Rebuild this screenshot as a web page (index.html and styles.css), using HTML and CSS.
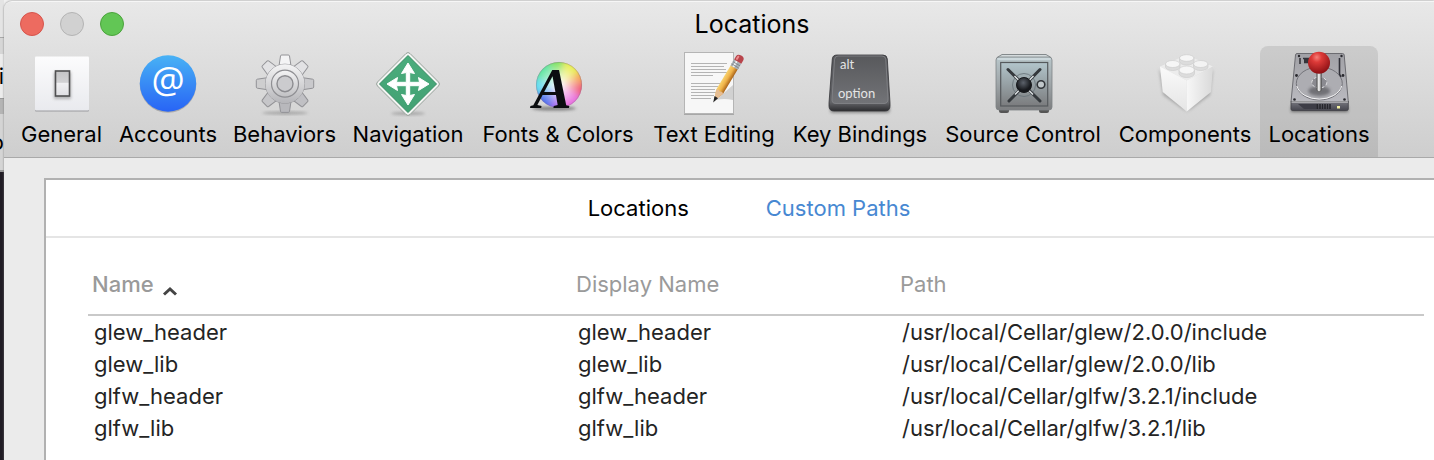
FILE: index.html
```html
<!DOCTYPE html>
<html lang="en">
<head>
<meta charset="utf-8">
<title>Locations</title>
<link rel="stylesheet" href="styles.css">
</head>
<body>
<div class="desktop">
  <div class="behind" aria-hidden="true">
    <div class="behind-title"></div>
    <div class="behind-bar">i</div>
    <div class="behind-tabs"></div>
    <div class="behind-path">o</div>
  </div>
  <main class="window">
    <header class="chrome">
      <div class="titlebar">
        <div class="lights">
          <button class="light close" aria-label="Close"></button>
          <button class="light minimize" aria-label="Minimize"></button>
          <button class="light zoom" aria-label="Zoom"></button>
        </div>
        <h1 class="title">Locations</h1>
      </div>
      <nav class="toolbar">
        <button class="tool">
          <svg class="icon" viewBox="0 0 64 64">
            <defs>
              <linearGradient id="plate" x2="0" y2="1"><stop stop-color="#fcfcfd"/><stop offset="1" stop-color="#e9eaee"/></linearGradient>
              <linearGradient id="rocker" x2="0" y2="1"><stop stop-color="#c4c4c6"/><stop offset=".45" stop-color="#d2d2d4"/><stop offset=".5" stop-color="#f0f0f2"/><stop offset="1" stop-color="#dfdfe3"/></linearGradient>
              <filter id="soft" x="-50%" y="-50%" width="200%" height="200%"><feGaussianBlur stdDeviation="1.5"/></filter>
            </defs>
            <rect x="5" y="5" width="54" height="54.500" rx="1" fill="#9a9a9e"/>
            <rect x="5" y="4.500" width="54" height="54" rx="1" fill="url(#plate)"/>
            <rect x="24" y="20" width="17" height="27" fill="#777" opacity=".5" filter="url(#soft)"/>
            <rect x="25.500" y="19" width="14" height="25" fill="url(#rocker)" stroke="#505052" stroke-width="1.600"/>
          </svg>
          <span>General</span>
        </button>
        <button class="tool">
          <svg class="icon" viewBox="0 0 64 64">
            <defs><linearGradient id="blue" x2="0" y2="1"><stop stop-color="#48b2f5"/><stop offset="1" stop-color="#2864f5"/></linearGradient></defs>
            <circle cx="32" cy="32.500" r="28.300" fill="#777" opacity=".45"/>
            <circle cx="32" cy="31.500" r="28.200" fill="url(#blue)"/>
            <text class="at" x="32" y="41" text-anchor="middle">@</text>
          </svg>
          <span>Accounts</span>
        </button>
        <button class="tool">
          <svg class="icon" viewBox="0 0 64 64">
            <defs>
              <linearGradient id="steel" x2="0" y2="1"><stop stop-color="#f4f4f5"/><stop offset=".5" stop-color="#d6d6d8"/><stop offset="1" stop-color="#b5b5b9"/></linearGradient>
              <linearGradient id="steel2" x2="0" y2="1"><stop stop-color="#f4f4f5"/><stop offset="1" stop-color="#c0c0c3"/></linearGradient>
              <path id="tooth" d="M26 14 L27.500 4 Q27.700 3 28.700 3 H35.300 Q36.300 3 36.500 4 L38 14Z"/>
            </defs>
            <ellipse cx="32" cy="61" rx="23" ry="1.500" fill="#777" opacity=".6" filter="url(#soft)"/>
            <g fill="#e2e2e4" stroke="#929296" stroke-width="1">
              <use href="#tooth" fill="#f4f4f5"/>
              <use href="#tooth" transform="rotate(45 32 31.700)"/>
              <use href="#tooth" transform="rotate(90 32 31.700)" fill="#c9c9cc"/>
              <use href="#tooth" transform="rotate(135 32 31.700)" fill="#c0c0c4"/>
              <use href="#tooth" transform="rotate(180 32 31.700)" fill="#b8b8bc"/>
              <use href="#tooth" transform="rotate(225 32 31.700)" fill="#c6c6c9"/>
              <use href="#tooth" transform="rotate(270 32 31.700)" fill="#cececf"/>
              <use href="#tooth" transform="rotate(315 32 31.700)"/>
              <circle cx="32" cy="31.700" r="19.500"/>
            </g>
            <circle cx="32" cy="31.700" r="19.500" fill="url(#steel)"/>
            <circle cx="32" cy="31.700" r="13.500" fill="url(#steel2)" stroke="#8f8f93" stroke-width="1.200"/>
            <circle cx="32" cy="31.700" r="8" fill="#cbcbce" stroke="#8c8c90" stroke-width="1.400"/>
          </svg>
          <span>Behaviors</span>
        </button>
        <button class="tool">
          <svg class="icon" viewBox="0 0 64 64">
            <defs><linearGradient id="green" x2="0" y2="1"><stop stop-color="#4bad7d"/><stop offset="1" stop-color="#42a173"/></linearGradient></defs>
            <ellipse cx="32" cy="61.500" rx="17" ry="1.500" fill="#666" opacity=".5" filter="url(#soft)"/>
            <path d="M30 1.500 Q32 -.5 34 1.500 L62.500 30 Q64.500 32 62.500 34 L34 62.500 Q32 64.500 30 62.500 L1.500 34 Q-.5 32 1.500 30Z" fill="#f3f5f3" stroke="#96a099" stroke-width="1"/>
            <path d="M32 3.500 L60.500 32 L32 60.500 L3.500 32Z" fill="url(#green)" stroke="#328a60" stroke-width="1"/>
            <path d="M32 11 L38.500 21.500 L33.700 20.500 V30.300 H43.500 L42.500 25.500 L53 32 L42.500 38.500 L43.500 33.700 H33.700 V43.500 L38.500 42.500 L32 53 L25.500 42.500 L30.300 43.500 V33.700 H20.500 L21.500 38.500 L11 32 L21.500 25.500 L20.500 30.300 H30.300 V20.500 L25.500 21.500Z" fill="#fff" stroke="#fff" stroke-width="1" stroke-linejoin="round"/>
          </svg>
          <span>Navigation</span>
        </button>
        <button class="tool">
          <svg class="icon" viewBox="0 0 64 64">
            <defs>
              <radialGradient id="hub"><stop stop-color="#fff"/><stop offset="1" stop-color="#fff" stop-opacity="0"/></radialGradient>
              <clipPath id="disc"><circle cx="33" cy="33" r="23"/></clipPath>
              <filter id="blend" x="-20%" y="-20%" width="140%" height="140%"><feGaussianBlur stdDeviation="3"/></filter>
            </defs>
            <ellipse cx="28" cy="56.500" rx="22" ry="2" fill="#444" opacity=".6" filter="url(#soft)"/>
            <g clip-path="url(#disc)">
              <rect x="8" y="8" width="50" height="50" fill="#e8a8e0"/>
              <g filter="url(#blend)">
                <path d="M33 33 L18 0 H40Z" fill="#84e36b"/>
                <path d="M33 33 L40 0 H66 V14Z" fill="#e9ee5a"/>
                <path d="M33 33 L66 12 V30Z" fill="#f5a55c"/>
                <path d="M33 33 L66 30 V50Z" fill="#f0647c"/>
                <path d="M33 33 L66 50 V66 H34Z" fill="#e872df"/>
                <path d="M33 33 L36 66 H20Z" fill="#a56af0"/>
                <path d="M33 33 L20 66 H0 V46Z" fill="#5573ee"/>
                <path d="M33 33 L0 46 V24Z" fill="#62dcf0"/>
                <path d="M33 33 L0 24 V0 H18Z" fill="#66e6a4"/>
              </g>
              <circle cx="33" cy="33" r="22" fill="url(#hub)"/>
            </g>
            <circle cx="33" cy="33" r="22.600" fill="none" stroke="#777" stroke-opacity=".35"/>
            <text class="serif-a" x="7" y="56">A</text>
          </svg>
          <span>Fonts &amp; Colors</span>
        </button>
        <button class="tool">
          <svg class="icon" viewBox="0 0 64 64">
            <defs><linearGradient id="wood" x1="0" y1="0" x2="1" y2="0"><stop stop-color="#f8d36f"/><stop offset=".5" stop-color="#efb248"/><stop offset="1" stop-color="#a96319"/></linearGradient></defs>
            <rect x="2" y="2" width="50" height="61" fill="#888" opacity=".6"/>
            <rect x="2.500" y=".5" width="49" height="61" fill="#f7f7f7" stroke="#b5b5b5"/>
            <path d="M34 48 L51 33 V48 Q42 46 34 48Z" fill="#999" opacity=".4"/>
            <path d="M9 11.500h36M9 14.500h33M9 17.500h35M9 20.500h36M9 23.500h22M9 31.500h36M9 34.500h27M9 37.500h24M9 40.500h25M9 43.500h23M9 46.500h20" stroke="#b4b4b4" stroke-width="1.200"/>
            <g transform="translate(32 49) rotate(31)">
              <path d="M0 0 L-4 -11 V-41 H4 V-11Z" fill="url(#wood)"/>
              <path d="M0 0 L-4 -11 Q-2 -13 0 -11 Q2 -13 4 -11Z" fill="#e6bd92"/>
              <path d="M0 0 L-1.300 -4 H1.300Z" fill="#222" stroke="#222"/>
              <rect x="-4.200" y="-46" width="8.400" height="7" fill="#a9b0b6"/>
              <path d="M-1 -46 V-39" stroke="#edf0f2" stroke-width="2"/>
              <path d="M-4.200 -43.500H4.200M-4.200 -41H4.200" stroke="#747b81" stroke-width=".7"/>
              <path d="M-4.200 -46 V-50 Q-4 -53 0 -53 Q4 -53 4.200 -50 V-46Z" fill="#b8444b"/>
              <path d="M-2 -48 V-50.500" stroke="#ed8c8d" stroke-width="2" stroke-linecap="round"/>
            </g>
          </svg>
          <span>Text Editing</span>
        </button>
        <button class="tool">
          <svg class="icon" viewBox="0 0 64 64">
            <defs>
              <linearGradient id="keytop" x2="0" y2="1"><stop stop-color="#58595c"/><stop offset="1" stop-color="#727377"/></linearGradient>
              <linearGradient id="keyside" x2="0" y2="1"><stop stop-color="#55565a"/><stop offset=".85" stop-color="#626367"/><stop offset="1" stop-color="#2d2d30"/></linearGradient>
            </defs>
            <rect x="2" y="54" width="60" height="7" rx="3" fill="#444" opacity=".5" filter="url(#soft)"/>
            <path d="M9 3 H55 Q59 3 59.300 7 L62 51 V54 Q62 59 57 59 H6 Q1 59 1 54 V51 L4.300 7 Q4.600 3 9 3Z" fill="url(#keyside)" stroke="#353538" stroke-width=".8"/>
            <path d="M10 4 H54 Q57.500 4 57.800 7.500 L60 47 Q60 51.500 56 51.500 H8 Q3.500 51.500 4 47 L6.500 7.500 Q6.700 4 10 4Z" fill="url(#keytop)" stroke="#85868a" stroke-width=".8"/>
            <text class="keycap" x="12" y="17">alt</text>
            <text class="keycap" x="10" y="46">option</text>
          </svg>
          <span>Key Bindings</span>
        </button>
        <button class="tool">
          <svg class="icon" viewBox="0 0 64 64">
            <defs>
              <linearGradient id="safe" x2="0" y2="1"><stop stop-color="#b9c7cb"/><stop offset=".5" stop-color="#9fa6a9"/><stop offset="1" stop-color="#7d7e80"/></linearGradient>
              <linearGradient id="door" x2="0" y2="1"><stop stop-color="#b2c5cb"/><stop offset="1" stop-color="#7b7c7e"/></linearGradient>
              <radialGradient id="dial" cx=".45" cy=".35"><stop stop-color="#5c626b"/><stop offset="1" stop-color="#17191d"/></radialGradient>
            </defs>
            <rect x="8" y="56" width="10" height="5" rx="2" fill="#555"/>
            <rect x="48" y="56" width="10" height="5" rx="2" fill="#555"/>
            <path d="M11 2.500 H55 L60 5.500 H6Z" fill="#d4dbdd" stroke="#6d7476" stroke-width=".8"/>
            <rect x="5" y="5" width="56" height="53" rx="3" fill="url(#safe)" stroke="#7d8385" stroke-width=".8"/>
            <path d="M6.500 7 H59.500" stroke="#e2ecef" stroke-width="1.200"/>
            <rect x="9.700" y="10.500" width="47" height="43.500" fill="url(#door)" stroke="#55595c" stroke-width="1.200"/>
            <circle cx="33" cy="33" r="11.500" fill="none" stroke="#667177" stroke-width=".8"/>
            <path d="M17 17.500 L49 49 M49 17.500 L18 49" stroke="#34383c" stroke-width="3" stroke-linecap="round"/>
            <path d="M23.500 24 L42 42.500 M42.500 24 L24 42.500" stroke="#e1e5e7" stroke-width="1.400"/>
            <circle cx="33" cy="33" r="7.500" fill="url(#dial)" stroke="#17191c" stroke-width="1"/>
            <circle cx="50" cy="32.500" r="3.800" fill="#c0c7ca" stroke="#303438" stroke-width="1.600"/>
          </svg>
          <span>Source Control</span>
        </button>
        <button class="tool">
          <svg class="icon" viewBox="0 0 64 64">
            <defs>
              <linearGradient id="sideL" x2="0" y2="1"><stop stop-color="#fafafa"/><stop offset="1" stop-color="#e5e5e5"/></linearGradient>
              <linearGradient id="sideR" x2="1" y2="0"><stop stop-color="#f7f7f7"/><stop offset="1" stop-color="#d9d9d9"/></linearGradient>
            </defs>
            <path d="M6 17 L34 60 L60 17 L57 43 L34 60 L10 43Z" fill="#777" opacity=".5" filter="url(#soft)"/>
            <path d="M7 14.500 L33.700 3 L60 14.500 L33.700 28.500Z" fill="#ececec"/>
            <path d="M7 14.500 L33.700 28.500 V59.500 L9.700 40Z" fill="url(#sideL)"/>
            <path d="M60 14.500 L33.700 28.500 V59.500 L58 40Z" fill="url(#sideR)"/>
            <g fill="#dcdcdc" stroke="#cacaca" stroke-width=".6">
              <path d="M26.500 5.500 V9.500 A7.200 3.500 0 0 0 41 9.500 V5.500Z"/><ellipse cx="33.700" cy="6" rx="7.200" ry="3.300" fill="#f6f6f6"/>
              <path d="M12.500 12 V15 A7.200 3.500 0 0 0 27 15 V12Z"/><ellipse cx="19.700" cy="12" rx="7.200" ry="3.500" fill="#f6f6f6"/>
              <path d="M40.500 12 V15 A7.200 3.500 0 0 0 55 15 V12Z"/><ellipse cx="47.700" cy="12" rx="7.200" ry="3.500" fill="#f3f3f3"/>
              <path d="M26 18 V21.500 A7.700 4 0 0 0 41.500 21.500 V18Z"/><ellipse cx="33.700" cy="18" rx="7.700" ry="4" fill="#f6f6f6"/>
            </g>
          </svg>
          <span>Components</span>
        </button>
        <button class="tool selected" aria-current="page">
          <svg class="icon" viewBox="0 0 64 64">
            <defs>
              <linearGradient id="drive" x2="0" y2="1"><stop stop-color="#a1a1a6"/><stop offset="1" stop-color="#b9b9bf"/></linearGradient>
              <linearGradient id="front" x2="0" y2="1"><stop stop-color="#77777f"/><stop offset="1" stop-color="#46464f"/></linearGradient>
              <radialGradient id="ball" cx=".4" cy=".25" r=".75"><stop stop-color="#f58078"/><stop offset=".3" stop-color="#dd3a38"/><stop offset="1" stop-color="#8c1014"/></radialGradient>
              <linearGradient id="stick"><stop stop-color="#777"/><stop offset=".45" stop-color="#fff"/><stop offset="1" stop-color="#666"/></linearGradient>
            </defs>
            <rect x="4" y="54" width="57" height="6" fill="#333" opacity=".6" filter="url(#soft)"/>
            <path d="M10 1.500 H55.500 Q57 1.500 57.200 3 L61.300 50 H4 L8.500 3 Q8.700 1.500 10 1.500Z" fill="url(#drive)" stroke="#636369" stroke-width=".9"/>
            <path d="M4 49.500 H61.300 V57 Q61.300 58.500 59.500 58.500 H6 Q4 58.500 4 57Z" fill="url(#front)" stroke="#414148" stroke-width=".8"/>
            <path d="M4.500 50 H61" stroke="#ddd" stroke-width="1"/>
            <path d="M11 52 H30 V57 H17Z" fill="#3c3c46"/>
            <path d="M30.500 52v5M33 52v5M35.500 52v5M38 52v5M40.500 52v5M43 52v5" stroke="#25252b" stroke-width="1.600"/>
            <rect x="50" y="54" width="3" height="2.500" fill="#f3f1a1"/>
            <ellipse cx="32.300" cy="31.500" rx="23" ry="16.500" fill="#adadb2" stroke="#74747a" stroke-width="1"/>
            <path d="M9.800 34 A23 16.500 0 0 0 54.800 34" fill="none" stroke="#f4f4f5" stroke-width="1"/>
            <ellipse cx="32.300" cy="39" rx="11" ry="5" fill="#3f3f45" opacity=".55" filter="url(#soft)"/>
            <ellipse cx="32.300" cy="30.500" rx="7.500" ry="5.500" fill="#8a8a90" stroke="#e1e1e3" stroke-dasharray="3 2"/>
            <path d="M13 6 V12 M16 6.500 H26 M17 10.500 H26" stroke="#303036" stroke-width="1.500"/>
            <rect x="17" y="6" width="5" height="5" fill="#34343a"/>
            <path d="M52.500 6 V22 L54 25" fill="none" stroke="#303038" stroke-width="1.600"/>
            <g fill="#29292e"><circle cx="12" cy="4" r="1.200"/><circle cx="54.500" cy="4" r="1.200"/><circle cx="9.500" cy="23.500" r="1.400"/><circle cx="56" cy="23.500" r="1.400"/><circle cx="7.500" cy="47.500" r="1.300"/><circle cx="57.500" cy="47.500" r="1.300"/></g>
            <rect x="29.800" y="19" width="4.600" height="20.500" rx="2" fill="url(#stick)" stroke="#555" stroke-width=".7"/>
            <circle cx="32" cy="10.800" r="11" fill="url(#ball)"/>
          </svg>
          <span>Locations</span>
        </button>
      </nav>
    </header>
    <section class="content">
      <div class="panel">
        <nav class="tabs">
          <button class="tab">Locations</button>
          <button class="tab active" aria-current="page">Custom Paths</button>
        </nav>
        <div class="table-area">
          <table class="paths">
            <colgroup><col class="col-name"><col class="col-display"><col></colgroup>
            <thead>
              <tr>
                <th class="sorted" aria-sort="ascending">Name<svg class="caret" viewBox="0 0 16 10"><path d="M2 8.500 L8 3 L14 8.500"/></svg></th>
                <th>Display Name</th>
                <th>Path</th>
              </tr>
            </thead>
            <tbody>
              <tr><td>glew_header</td><td>glew_header</td><td>/usr/local/Cellar/glew/2.0.0/include</td></tr>
              <tr><td>glew_lib</td><td>glew_lib</td><td>/usr/local/Cellar/glew/2.0.0/lib</td></tr>
              <tr><td>glfw_header</td><td>glfw_header</td><td>/usr/local/Cellar/glfw/3.2.1/include</td></tr>
              <tr><td>glfw_lib</td><td>glfw_lib</td><td>/usr/local/Cellar/glfw/3.2.1/lib</td></tr>
            </tbody>
          </table>
        </div>
      </div>
    </section>
  </main>
</div>
</body>
</html>
```

FILE: styles.css
```css
* {
  box-sizing: border-box;
}

body {
  margin: 0;
  background: #f0f0f0;
  color: #000;
  font-family: Inter, "Liberation Sans", sans-serif;
  font-size: 22px;
  line-height: 32px;
}

button {
  margin: 0;
  padding: 0;
  border: 0;
  background: none;
  color: inherit;
  font: inherit;
}

.desktop {
  display: grid;
  grid-template-columns: 4px minmax(0, 1fr);
  min-height: 100vh;
  overflow: hidden;
}

.behind {
  display: flex;
  flex-direction: column;
  overflow: hidden;
  background: #201c24;
}

.behind-title {
  height: 38px;
  background: #e4e4e4;
  border-bottom: 1px solid #a8a8a8;
}

.behind-bar {
  display: flex;
  align-items: center;
  justify-content: flex-end;
  height: 61px;
  background: #ececec;
  border-top: 16px solid #d6d6d6;
  border-bottom: 1px solid #999;
}

.behind-tabs {
  height: 15px;
  background: #b4b4b4;
}

.behind-path {
  display: flex;
  align-items: center;
  justify-content: flex-end;
  height: 58px;
  background: #d4d4d4;
  border-bottom: 2px solid #999;
}

.window {
  display: flex;
  flex-direction: column;
  margin-top: 1px;
  border-top: 1px solid #f6f6f6;
  border-top-left-radius: 8px;
  background: #ebebeb;
  box-shadow: 0 0 2px #777;
}

.chrome {
  border-bottom: 1px solid #a9a9a9;
  border-top-left-radius: 8px;
  background: linear-gradient(#e8e8e8, #cecece);
}

.titlebar {
  display: grid;
  grid-template-columns: 104px 1fr;
  align-items: center;
  height: 44px;
  padding-left: 16px;
}

.lights {
  display: flex;
  gap: 16px;
}

.light {
  width: 24px;
  height: 24px;
  border: 1px solid #b4b4b4;
  border-radius: 50%;
  background: #d1d1d1;
}

.close {
  border-color: #d6544c;
  background: #ed6b60;
}

.zoom {
  border-color: #4ba33c;
  background: #62c655;
}

.title {
  margin: 0;
  padding-right: 54px;
  font-size: 25px;
  font-weight: 400;
  text-align: center;
}

.toolbar {
  display: grid;
  grid-template-columns: 99px 114px 119px 128px 172px 140px 152px 174px 150px 118px;
  padding-left: 8px;
}

.tool {
  display: flex;
  flex-direction: column;
  align-items: center;
  padding: 6px 0 7px;
  white-space: nowrap;
}

.tool.selected {
  border-radius: 8px 8px 0 0;
  background: #00000018;
}

.icon {
  width: 64px;
  height: 64px;
  margin-bottom: 2px;
  overflow: visible;
}

.at {
  fill: #fff;
  font-family: "Open Sans", sans-serif;
  font-size: 37px;
}

.serif-a {
  fill: #0b0d10;
  font-family: "Liberation Serif", serif;
  font-size: 58px;
  font-style: italic;
  font-weight: 700;
}

.keycap {
  fill: #e5e5e5;
  font-family: Lato, sans-serif;
  font-size: 13px;
}

.content {
  display: flex;
  flex: 1;
  padding: 20px 0 0 40px;
}

.panel {
  flex: 1;
  border-top: 2px solid #b1b1b1;
  border-left: 2px solid #b1b1b1;
  background: #fff;
}

.tabs {
  display: flex;
  justify-content: center;
  gap: 77px;
  padding: 12px 0 12px 18px;
  border-bottom: 2px solid #e5e5e5;
}

.tab.active {
  color: #4788d2;
}

.table-area {
  padding: 22px 10px 0 42px;
}

.paths {
  width: 100%;
  border-collapse: separate;
  border-spacing: 0;
  table-layout: fixed;
}

.col-name {
  width: 484px;
}

.col-display {
  width: 324px;
}

.paths th {
  height: 56px;
  padding: 0 4px 6px;
  border-bottom: 2px solid #c9c9c9;
  color: #9a9a9a;
  font-weight: 400;
  text-align: left;
}

.paths .sorted {
  font-weight: 500;
}

.paths td {
  height: 32px;
  padding: 0 6px;
  color: #242424;
}

.caret {
  width: 16px;
  height: 10px;
  margin-left: 8px;
  vertical-align: -4px;
  fill: none;
  stroke: #444;
  stroke-width: 3;
}
```
